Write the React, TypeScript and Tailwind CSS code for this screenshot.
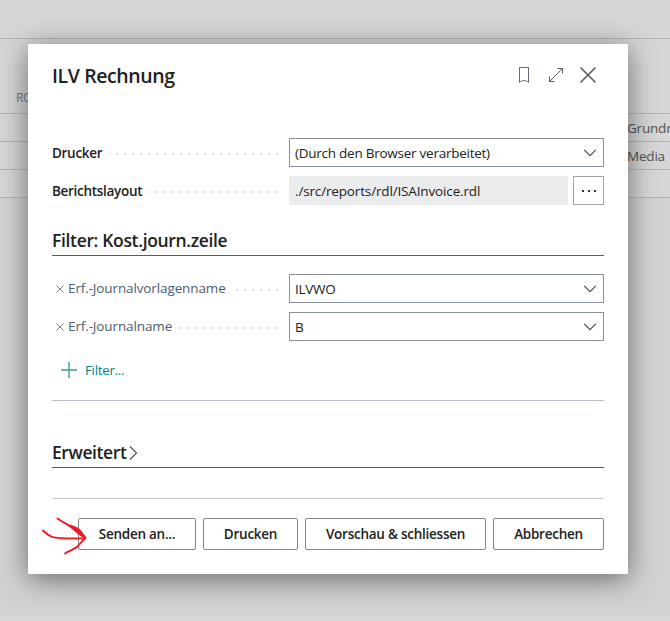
import React from "react";

function Dots({ className }: { className: string }) {
  return (
    <span
      className={`h-[2px] shrink-0 bg-[repeating-linear-gradient(to_left,#dadada_0px,#dadada_2px,transparent_2px,transparent_8px)] ${className}`}
    />
  );
}

function Chevron() {
  return (
    <svg width="14" height="10" viewBox="0 0 14 10" fill="none" className="mt-px shrink-0">
      <path d="M1.2 1.8 L7 7.6 L12.8 1.8" stroke="#454b5c" strokeWidth="1.1" />
    </svg>
  );
}

function Select({ value }: { value: string }) {
  return (
    <div className="flex h-[29px] w-[315px] items-center justify-between border border-[#8a919e] bg-white pr-[6px] pl-[5px]">
      <span className="pt-px text-[#212121]">{value}</span>
      <Chevron />
    </div>
  );
}

function RemoveIcon() {
  return (
    <svg width="8" height="8" viewBox="0 0 8 8" fill="none" className="mr-1 ml-1 shrink-0">
      <path d="M0.4 0.4 L7.6 7.6 M7.6 0.4 L0.4 7.6" stroke="#6c7484" strokeWidth="0.9" />
    </svg>
  );
}

function Button({ label, className }: { label: string; className: string }) {
  return (
    <button
      className={`flex h-8 items-center justify-center rounded-[2px] border border-[#858588] bg-white pt-px font-[550] whitespace-nowrap text-[#212121] ${className}`}
    >
      {label}
    </button>
  );
}

function Backdrop() {
  return (
    <div className="flex h-full flex-col bg-[#d1d3d2] text-[13.5px] tracking-[-0.2px]">
      <div className="h-[39px] border-b border-[#b4b5b5] bg-[#d6d6d6]" />
      <div className="flex h-[75px] items-end border-b border-[#b4b6b6] bg-[#d6d6d6] pb-[7px] pl-4">
        <span className="text-[12px] leading-4 tracking-[-0.5px] text-[#737980]">RO</span>
      </div>
      <div className="flex h-7 items-center border-b border-[#b4b6b6] bg-[#d6d6d6] pt-[2px] pl-[627px] whitespace-nowrap text-[#505357]">
        Grundr
      </div>
      <div className="flex h-7 items-center border-b border-[#b4b6b6] bg-[#d6d6d6] pt-[2px] pl-[627px] text-[#505357]">
        Media
      </div>
      <div className="h-7 border-b border-[#b4b6b6] bg-[#d6d6d6]" />
      <div className="mt-auto h-[4px] bg-[#d6d6d6]" />
    </div>
  );
}

export default function App() {
  return (
    <div className="relative h-[621px] w-[670px] overflow-hidden font-['Open_Sans','Noto_Sans',sans-serif] text-[13.5px] tracking-[-0.25px]">
      <Backdrop />
      <div className="absolute top-[44px] left-[28px] flex h-[530px] w-[600px] flex-col rounded-[1px] bg-white px-6 shadow-[0_5px_28px_rgba(0,0,0,0.5)]">
        <header className="flex h-16 items-center justify-between pr-[7px]">
          <h1 className="text-[19.5px] font-[550] tracking-[-0.4px] text-[#212121]">ILV Rechnung</h1>
          <div className="flex items-center text-[#505c6d]">
            <svg width="12" height="18" viewBox="0 0 12 18" fill="none" className="-mt-[2px] mr-[18px]">
              <path d="M1.5 1.5 H10.5 V16.5 C9 14 3 14 1.5 16.5 Z" stroke="#6b6578" />
            </svg>
            <svg width="16" height="16" viewBox="0 0 16 16" fill="none" className="-mt-[2px] mr-[15px]">
              <path d="M1.5 14.5 L14.5 1.5 M9.5 1.5 H14.5 V6.5 M1.5 9.5 V14.5 H6.5" stroke="#625f62" />
            </svg>
            <svg width="18" height="18" viewBox="0 0 18 18" fill="none" className="-mt-[2px]">
              <path d="M1.5 1.5 L16.5 16.5 M16.5 1.5 L1.5 16.5" stroke="#5b5b5f" strokeWidth="1.6" />
            </svg>
          </div>
        </header>

        <div className="mt-[30px] flex h-[29px] items-center">
          <div className="flex w-[237px] items-center justify-between pt-[2px] pr-[11px]">
            <span className="font-[550] tracking-[-0.3px] text-[#212121]">Drucker</span>
            <Dots className="w-[169px]" />
          </div>
          <Select value="(Durch den Browser verarbeitet)" />
        </div>
        <div className="mt-[9px] flex h-[29px] items-center">
          <div className="flex w-[237px] items-center justify-between pt-[2px] pr-[11px]">
            <span className="font-[550] tracking-[-0.3px] text-[#212121]">Berichtslayout</span>
            <Dots className="w-[129px]" />
          </div>
          <div className="flex h-[29px] w-[279px] items-center bg-[#ebecee] pt-[2px] pl-[6px] tracking-[-0.15px] text-[#212121]">
            ./src/reports/rdl/ISAInvoice.rdl
          </div>
          <button className="ml-[5px] flex h-[29px] w-[31px] items-center justify-center gap-1 border border-[#a3a5a8] pt-px">
            <span className="size-[2px] bg-[#333]" />
            <span className="size-[2px] bg-[#333]" />
            <span className="size-[2px] bg-[#333]" />
          </button>
        </div>

        <h2 className="mt-[22px] h-[29px] border-b border-[#505c6d] text-[17.5px] leading-[27px] font-[550] tracking-[-0.34px] text-[#212121]">
          Filter: Kost.journ.zeile
        </h2>

        <div className="mt-[18px] flex h-[29px] items-center text-[#505c6d]">
          <div className="flex w-[237px] items-center pr-[11px]">
            <RemoveIcon />
            <span className="tracking-[-0.12px]">Erf.-Journalvorlagenname</span>
            <span className="grow" />
            <Dots className="mt-[2px] w-[42px]" />
          </div>
          <Select value="ILVWO" />
        </div>
        <div className="mt-[9px] flex h-[29px] items-center text-[#505c6d]">
          <div className="flex w-[237px] items-center pr-[11px]">
            <RemoveIcon />
            <span className="tracking-[-0.12px]">Erf.-Journalname</span>
            <span className="grow" />
            <Dots className="mt-[2px] w-[98px]" />
          </div>
          <Select value="B" />
        </div>

        <div className="flex h-[60px] items-center border-b border-[#b9bfc6] pl-[9px] text-[#00838a]">
          <svg width="16" height="16" viewBox="0 0 16 16" fill="none" className="-mt-px mr-2">
            <path d="M8 0 V16 M0 8 H16" stroke="#3c9999" strokeWidth="1.4" />
          </svg>
          <span className="tracking-[-0.35px]">Filter...</span>
        </div>

        <div className="mt-[38px] flex h-[29px] items-start border-b border-[#4b5468]">
          <h2 className="text-[17.5px] leading-[27px] font-[550] tracking-[-0.4px] text-[#212121]">Erweitert</h2>
          <svg width="9" height="14" viewBox="0 0 9 14" fill="none" className="mt-[7px] ml-[3px]">
            <path d="M1 0.5 L7.5 7 L1 13.5" stroke="#45495c" strokeWidth="1.1" />
          </svg>
        </div>

        <footer className="relative mt-[30px] flex gap-[7px] border-t border-[#c8c8c8] pt-[19px] pl-[26px]">
          <Button label="Senden an..." className="w-[118px]" />
          <Button label="Drucken" className="w-[95px]" />
          <Button label="Vorschau & schliessen" className="w-[181px]" />
          <Button label="Abbrechen" className="w-[111px]" />
          <svg
            width="48"
            height="42"
            viewBox="0 0 48 42"
            fill="none"
            stroke="#ed1c24"
            strokeWidth="1.9"
            strokeLinecap="round"
            strokeLinejoin="round"
            className="absolute top-[17px] left-[-12px]"
          >
            <path d="M3 14.500 C6 17 8 19.500 12 20.800 C19 23 29 22.500 43 22.500" />
            <path d="M17.500 2.500 C22 6 27 8 31 11 C36 14 43 17 45.500 22 C42 25 40 28 38 30 C34 34 29 34.500 25 37.500" />
            <path d="M30 9.500 C35 11 39 13 41 16 L45 22 C40 19 35 14 30 10 M34 12 L43 19" />
          </svg>
        </footer>
      </div>
    </div>
  );
}
